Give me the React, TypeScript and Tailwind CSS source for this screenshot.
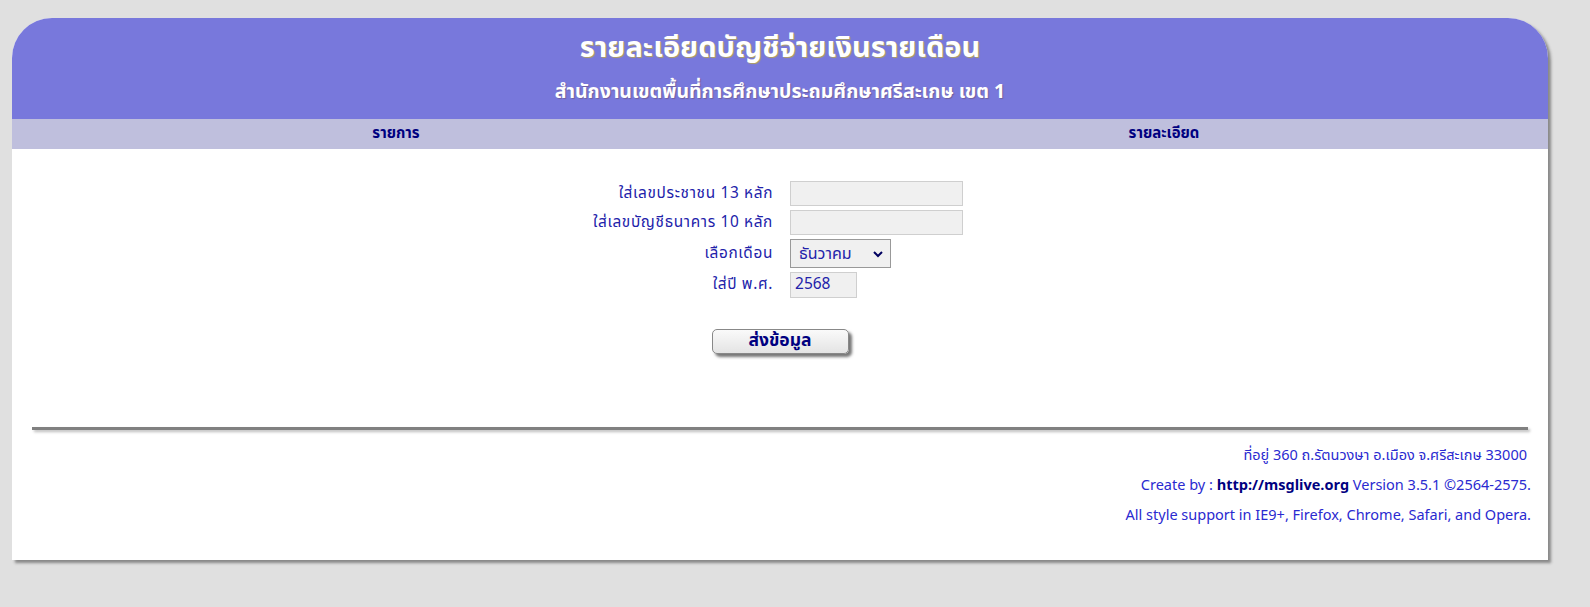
import React from "react";

export default function App() {
  const font = { fontFamily: 'Tahoma, "Noto Sans Thai", "Noto Sans", "DejaVu Sans", sans-serif' };
  return (
    <div className="min-h-[607px] w-full bg-[#e0e0e0] pt-[18px] pl-[12px]" style={font}>
      <div className="w-[1536px] bg-white rounded-t-[40px] shadow-[3px_3px_3px_#888]">
        <div className="h-[101px] bg-[#7878dc] rounded-t-[40px] flex flex-col items-center">
          <div className="mt-[12px] text-[29px] leading-[36px] font-bold text-white [text-shadow:1px_1px_1px_#b0a060]">
            รายละเอียดบัญชีจ่ายเงินรายเดือน
          </div>
          <div className="mt-[13px] text-[19.5px] leading-[26px] font-bold text-white [text-shadow:1px_1px_1px_#7060a0]">
            สำนักงานเขตพื้นที่การศึกษาประถมศึกษาศรีสะเกษ เขต 1
          </div>
        </div>
        <div className="h-[30px] bg-[#bfbfdd] grid grid-cols-2 items-center text-[15px] font-bold text-[#000080]">
          <div className="text-center">รายการ</div>
          <div className="text-center">รายละเอียด</div>
        </div>
        <div className="pt-[32px] flex flex-col items-center">
          <div className="grid grid-cols-[auto_auto] gap-x-[17px] gap-y-[4px] items-center text-[15.4px] text-[#2222aa] ml-[-4px]">
            <div className="text-right tracking-[0.65px]">ใส่เลขประชาชน 13 หลัก</div>
            <input className="w-[173px] h-[25px] bg-[#f0f0f0] border border-[#cfcfcf] outline-none" />
            <div className="text-right tracking-[0.65px]">ใส่เลขบัญชีธนาคาร 10 หลัก</div>
            <input className="w-[173px] h-[25px] bg-[#f0f0f0] border border-[#cfcfcf] outline-none" />
            <div className="text-right tracking-[0.65px]">เลือกเดือน</div>
            <div className="w-[101px] h-[29px] bg-[#f0f0f0] border border-[#999] flex items-center justify-between pl-[8px] pr-[6px] text-[16px] text-[#2222aa]">
              <span>ธันวาคม</span>
              <svg width="12" height="12" viewBox="0 0 12 12">
                <path d="M2 4 L6 8 L10 4" fill="none" stroke="#000060" strokeWidth="2" />
              </svg>
            </div>
            <div className="text-right tracking-[0.65px]">ใส่ปี พ.ศ.</div>
            <div className="w-[67px] h-[26px] bg-[#f0f0f0] border border-[#cfcfcf] flex items-center px-[4px] text-[15.5px] text-[#2222aa]">2568</div>
          </div>
          <div className="mt-[31px] w-[137px] h-[25px] rounded-[5px] border border-[#888] bg-gradient-to-b from-[#fafafa] to-[#e4e4e4] shadow-[3px_3px_3px_#777] flex items-center justify-center text-[17.5px] font-bold text-[#000080]">
            ส่งข้อมูล
          </div>
        </div>
        <div className="mt-[73px] mx-[20px] h-[3px] bg-[#808080] shadow-[2px_2px_3px_#bbb]" />
        <div className="pt-[11px] pb-[29px] pr-[17px] text-right text-[14.5px] text-[#2a2ad0] leading-[30px]">
          <div className="pr-[4px]">ที่อยู่ 360 ถ.รัตนวงษา อ.เมือง จ.ศรีสะเกษ 33000</div>
          <div>
            Create by : <span className="font-bold text-[#000080]">http://msglive.org</span> Version 3.5.1 ©2564-2575.
          </div>
          <div>All style support in IE9+, Firefox, Chrome, Safari, and Opera.</div>
        </div>
      </div>
    </div>
  );
}
